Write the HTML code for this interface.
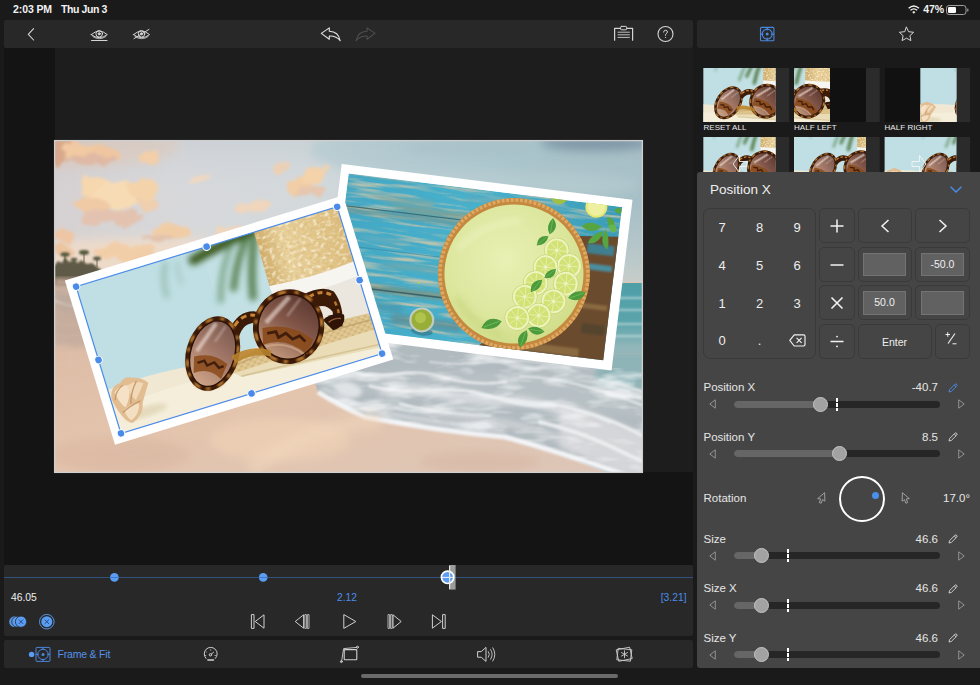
<!DOCTYPE html>
<html>
<head>
<meta charset="utf-8">
<title>Frame &amp; Fit</title>
<style>
*{box-sizing:border-box;margin:0;padding:0}
html,body{width:980px;height:685px;overflow:hidden;background:#1a1a1a}
body{position:relative;font-family:"Liberation Sans",sans-serif;color:#e8e8e8}
.abs{position:absolute}
.bar{position:absolute;background:#282828;border-radius:2px}
.status{position:absolute;top:3px;font-size:10.5px;font-weight:bold;color:#f2f2f2;line-height:13px;letter-spacing:-.1px}
svg{position:absolute;overflow:visible}
.lbl{position:absolute;font-size:11.5px;color:#e6e6e6;line-height:13px;white-space:nowrap}
.val{position:absolute;font-size:11.5px;color:#e6e6e6;line-height:13px;white-space:nowrap;text-align:right}
.track{position:absolute;height:7px;border-radius:4px;background:#262626}
.fill{position:absolute;height:7px;border-radius:4px;background:#666}
.knob{position:absolute;width:15px;height:15px;border-radius:50%;background:#a2a2a2;border:1px solid #c4c4c4}
.tick{position:absolute;width:2px;height:13px;background:repeating-linear-gradient(#fff 0 4px,transparent 4px 5px)}
.key{position:absolute;border:1px solid #3a3a3a;border-radius:5px;background:#454545}
.ibox{position:absolute;background:#616161;border:1px solid #737373;font-size:10.5px;color:#f0f0f0;text-align:center;line-height:21.5px}
.tl{position:absolute;top:122.5px;font-size:8px;line-height:9px;letter-spacing:.05px;color:#ececec;white-space:nowrap}
.num{position:absolute;font-size:13px;color:#eee;width:20px;text-align:center;line-height:14px}
</style>
</head>
<body>

<!-- status bar -->
<div class="status" style="left:13px">2:03 PM</div>
<div class="status" style="left:61px;letter-spacing:-.4px">Thu Jun 3</div>
<div class="status" style="left:923.3px">47%</div>

<!-- top toolbars -->
<div class="bar" style="left:4px;top:20px;width:689px;height:28px"></div>
<div class="bar" style="left:697px;top:20px;width:283px;height:28px;border-radius:3px 0 0 3px"></div>

<!-- canvas area -->
<div class="abs" style="left:4px;top:48px;width:689px;height:517px;background:#141414"></div>
<div class="abs" id="stage" style="left:55px;top:48px;width:638px;height:424px;background:#1d1d1d"></div>

<!-- photo -->
<svg id="photo" style="left:54px;top:140px" width="589" height="333" viewBox="54 140 589 333">
<defs>
<clipPath id="cpMain"><rect x="54" y="140" width="589" height="333"/></clipPath>
<filter id="b2" x="-20%" y="-20%" width="140%" height="140%"><feGaussianBlur stdDeviation="2"/></filter>
<filter id="b3" x="-20%" y="-20%" width="140%" height="140%"><feGaussianBlur stdDeviation="3.2"/></filter>
<filter id="b5" x="-30%" y="-30%" width="160%" height="160%"><feGaussianBlur stdDeviation="5"/></filter>
<filter id="wear" x="0" y="0" width="100%" height="100%"><feTurbulence type="fractalNoise" baseFrequency="0.018 0.22" numOctaves="3" seed="7"/><feColorMatrix values="0 0 0 0 .60  0 0 0 0 .57  0 0 0 0 .42  3.4 0 0 0 -1.6"/></filter>
<filter id="wear2" x="0" y="0" width="100%" height="100%"><feTurbulence type="fractalNoise" baseFrequency="0.03 0.5" numOctaves="2" seed="11"/><feColorMatrix values="0 0 0 0 .14  0 0 0 0 .36  0 0 0 0 .44  2.6 0 0 0 -1.35"/></filter>
<filter id="foamT" x="0" y="0" width="100%" height="100%"><feTurbulence type="fractalNoise" baseFrequency="0.022 0.07" numOctaves="3" seed="3"/><feColorMatrix values="0 0 0 0 .93  0 0 0 0 .94  0 0 0 0 .95  3.4 0 0 0 -1.6"/></filter>
<filter id="sandT" x="0" y="0" width="100%" height="100%"><feTurbulence type="fractalNoise" baseFrequency="0.05 0.18" numOctaves="2" seed="5"/><feColorMatrix values="0 0 0 0 .72  0 0 0 0 .56  0 0 0 0 .48  1.6 0 0 0 -.72"/></filter>
<filter id="cloudF" x="-20%" y="-20%" width="140%" height="140%"><feTurbulence type="fractalNoise" baseFrequency=".05" numOctaves="3" seed="2" result="n"/><feDisplacementMap in="SourceGraphic" in2="n" scale="16" xChannelSelector="R" yChannelSelector="G"/><feGaussianBlur stdDeviation="1.4"/></filter>
<filter id="strawL" x="0" y="0" width="100%" height="100%"><feTurbulence type="fractalNoise" baseFrequency=".22 .3" numOctaves="2" seed="9"/><feColorMatrix values="0 0 0 0 .96  0 0 0 0 .90  0 0 0 0 .72  3 0 0 0 -1.45"/></filter>
<filter id="strawD" x="0" y="0" width="100%" height="100%"><feTurbulence type="fractalNoise" baseFrequency=".25 .33" numOctaves="2" seed="21"/><feColorMatrix values="0 0 0 0 .62  0 0 0 0 .45  0 0 0 0 .2  3 0 0 0 -1.6"/></filter>
<filter id="b1" x="-20%" y="-20%" width="140%" height="140%"><feGaussianBlur stdDeviation="1"/></filter>
<linearGradient id="skyH" x1="0" x2="1" y1="0" y2="0">
 <stop offset="0" stop-color="#d6d0d1"/><stop offset=".2" stop-color="#d8d8db"/><stop offset=".45" stop-color="#d3d9dc"/><stop offset=".62" stop-color="#bccfd4"/><stop offset=".8" stop-color="#a9c4ca"/><stop offset="1" stop-color="#a6bfc6"/>
</linearGradient>
<linearGradient id="skyV" x1="0" x2="0" y1="0" y2="1">
 <stop offset="0" stop-color="#9fb2bc" stop-opacity=".18"/><stop offset=".4" stop-color="#c8d4d8" stop-opacity="0"/><stop offset="1" stop-color="#f3dfcc" stop-opacity=".5"/>
</linearGradient>
<linearGradient id="sandG" x1="0" x2="1" y1="0" y2="1">
 <stop offset="0" stop-color="#d8b7a3"/><stop offset=".45" stop-color="#e4c4ac"/><stop offset="1" stop-color="#dcc6b8"/>
</linearGradient>
<linearGradient id="seaG" x1="0" x2="0" y1="0" y2="1">
 <stop offset="0" stop-color="#4f9fa8"/><stop offset=".55" stop-color="#5aa4aa"/><stop offset="1" stop-color="#9dbabd"/>
</linearGradient>
</defs>
<g clip-path="url(#cpMain)">
<!-- sky -->
<rect x="54" y="140" width="589" height="150" fill="url(#skyH)"/>
<rect x="54" y="140" width="589" height="150" fill="url(#skyV)"/>
<ellipse cx="70" cy="146" rx="110" ry="22" fill="#e8c4a8" opacity=".35" filter="url(#b5)"/><ellipse cx="150" cy="288" rx="250" ry="50" fill="#f2dcc8" opacity=".8" filter="url(#b5)"/><ellipse cx="430" cy="150" rx="120" ry="26" fill="#a9c6ce" opacity=".5" filter="url(#b5)"/>
<!-- clouds -->
<g filter="url(#cloudF)">
 <ellipse cx="58" cy="150" rx="10" ry="14" fill="#d8a98c"/>
 <ellipse cx="80" cy="150" rx="20" ry="9" fill="#f1c9a2"/><ellipse cx="104" cy="154" rx="20" ry="8" fill="#efc6a0"/><ellipse cx="92" cy="160" rx="26" ry="5" fill="#dfb9a4"/>
 <ellipse cx="149" cy="160" rx="10" ry="6" fill="#f2cfa8"/>
 <ellipse cx="96" cy="187" rx="17" ry="11" fill="#f6d7ae"/><ellipse cx="118" cy="196" rx="26" ry="14" fill="#f7dbb4"/><ellipse cx="142" cy="190" rx="16" ry="10" fill="#f4d3aa"/>
 <ellipse cx="92" cy="206" rx="18" ry="9" fill="#f0caa4"/><ellipse cx="112" cy="218" rx="30" ry="7" fill="#e3c3b0"/><ellipse cx="146" cy="203" rx="12" ry="6" fill="#efcfae"/>
 <ellipse cx="170" cy="231" rx="19" ry="8" fill="#f1cda6"/><ellipse cx="160" cy="238" rx="16" ry="4" fill="#e4c2ac"/>
 <ellipse cx="66" cy="234" rx="11" ry="8" fill="#eec6a4"/><ellipse cx="62" cy="250" rx="10" ry="6" fill="#ecc4a0"/>
 <ellipse cx="122" cy="252" rx="30" ry="8" fill="#f2cea8"/><ellipse cx="150" cy="262" rx="20" ry="6" fill="#efcaa6"/>
 <ellipse cx="300" cy="186" rx="11" ry="10" fill="#f2cea6"/><ellipse cx="314" cy="176" rx="12" ry="11" fill="#f4d2aa"/><ellipse cx="310" cy="194" rx="14" ry="5" fill="#e6c6ae"/>
 <ellipse cx="254" cy="206" rx="19" ry="6" fill="#efd6bc"/><ellipse cx="200" cy="178" rx="11" ry="4" fill="#efd8c0"/><ellipse cx="281" cy="167" rx="8" ry="6" fill="#ecd0b6"/>
 <ellipse cx="226" cy="232" rx="12" ry="5" fill="#efd6bc"/>
 <ellipse cx="332" cy="240" rx="10" ry="8" fill="#c99c7c"/>
</g>
<g filter="url(#b5)">
 <ellipse cx="595" cy="143" rx="55" ry="8" fill="#7890a0" opacity=".8"/>
 <ellipse cx="470" cy="148" rx="70" ry="7" fill="#a9bec6" opacity=".6"/>
 <ellipse cx="500" cy="185" rx="140" ry="14" fill="#bcd0d4" opacity=".5"/>
</g>
<!-- sea right -->
<rect x="590" y="283" width="60" height="70" fill="url(#seaG)"/>
<path d="M600 300h43M606 312h37M600 326h43M610 338h33" stroke="#b9d6d8" stroke-width="1.6" opacity=".7" filter="url(#b1)"/>
<!-- beach -->
<rect x="54" y="282" width="589" height="191" fill="url(#sandG)"/>
<rect x="590" y="283" width="60" height="70" fill="url(#seaG)"/>
<path d="M600 298h43M606 310h37M600 324h43M610 336h33" stroke="#c5dfe0" stroke-width="1.8" opacity=".7" filter="url(#b1)"/>
<!-- left treeline and wet sand -->
<path d="M54 266 l4-5 4 2 3-6 4 5 5-2 4 3 3-3 6 4 5-1 8 6 12 6 0 10 -58 0z" fill="#5e5a46" filter="url(#b1)"/><path d="M65 264v-9M84 263v-10M97 267v-8M74 266v-6" stroke="#6a5a44" stroke-width=".9" fill="none"/><g fill="#55583c" filter="url(#b1)"><ellipse cx="65" cy="254.5" rx="4.6" ry="2.2"/><ellipse cx="84" cy="252.5" rx="5" ry="2.4"/><ellipse cx="97" cy="258.5" rx="4" ry="2"/><ellipse cx="74" cy="259.5" rx="3.4" ry="1.8"/></g>
<path d="M54 278h62v9h-62z" fill="#b9a08e" filter="url(#b2)"/>
<path d="M54 290 q20 6 40 2 l10 20 q-30 4 -50 -4z" fill="#c4b2a6" opacity=".75" filter="url(#b3)"/>
<path d="M54 300 q14 8 34 6" stroke="#e9e2de" stroke-width="2.5" fill="none" filter="url(#b1)" opacity=".8"/>
<path d="M54 288 L120 288 L110 340 Q80 352 54 344Z" fill="#b5a396" opacity=".55" filter="url(#b3)"/>
<rect x="54" y="284" width="536" height="189" filter="url(#sandT)" opacity=".28"/>
<!-- shallow water & foam -->
<path d="M300 340 L600 340 L600 368 L660 368 L660 480 L625 480 Q560 452 505 438 Q440 432 365 418 Q340 405 318 392 Z" fill="#b0babf"/>
<path d="M330 372 L600 372 L660 380 L660 420 Q540 405 430 402 Q370 398 330 380Z" fill="#b7c0c4" filter="url(#b3)"/><path d="M596 350 L660 350 L660 392 L596 384Z" fill="#8fb4b8" filter="url(#b3)"/>
<path d="M560 400 Q610 420 660 440 L660 480 L628 480 Q600 462 560 448Z" fill="#d5d6d9" filter="url(#b3)"/>
<path d="M380 392 q30 -8 60 2 q40 10 80 6 q30 4 60 20" stroke="#e6e7ea" stroke-width="7" fill="none" filter="url(#b3)" opacity=".85"/>
<path d="M420 410 q50 6 90 14 q40 8 80 28" stroke="#dcdde0" stroke-width="6" fill="none" filter="url(#b3)" opacity=".8"/>
<path d="M318 392 Q340 406 365 417 Q440 431 505 437 Q560 452 628 476" stroke="#f2f3f5" stroke-width="5" fill="none" filter="url(#b1)"/>
<path d="M322 388 Q345 398 368 410 Q440 424 505 431" stroke="#e3e4e7" stroke-width="4" fill="none" filter="url(#b2)" opacity=".8"/>
<g filter="url(#b1)" fill="none" stroke="#eef0f2" stroke-linecap="round" opacity=".9">
 <path d="M352 372 q20 6 44 2 q26 -4 50 4 q30 8 60 4" stroke-width="2.4"/>
 <path d="M430 362 q30 4 60 0 q40 -4 80 6" stroke-width="2" opacity=".7"/>
 <path d="M370 386 q30 8 70 4 q30 -2 56 8 q30 10 60 8" stroke-width="3"/>
 <path d="M470 392 q40 10 80 12 q30 4 60 18" stroke-width="3.2"/>
 <path d="M520 376 q40 2 70 12 q26 8 52 10" stroke-width="2.4" opacity=".8"/>
 <path d="M540 422 q40 10 70 24 q20 10 34 16" stroke-width="4"/>
 <path d="M575 410 q30 6 68 26" stroke-width="3.5"/>
 <path d="M400 404 q40 10 90 12" stroke-width="2.6" opacity=".8"/>
 <path d="M600 380 q20 4 44 12M606 394 q20 4 38 12" stroke-width="2.6" opacity=".8"/>
</g>
<path d="M332 384 q14 -6 26 2 q10 8 -4 12 q-16 0 -22 -14z" fill="#eceef0" opacity=".8" filter="url(#b2)"/>
<clipPath id="cpWater"><path d="M300 340 L600 340 L600 368 L660 368 L660 480 L625 480 Q560 452 505 438 Q440 432 365 418 Q340 405 318 392 Z"/></clipPath>
<g clip-path="url(#cpWater)"><rect x="300" y="340" width="360" height="140" filter="url(#foamT)" opacity=".7"/></g>
<!-- sand highlights -->
<ellipse cx="280" cy="440" rx="70" ry="22" fill="#f0d2b6" opacity=".65" filter="url(#b5)"/>
<ellipse cx="120" cy="455" rx="70" ry="18" fill="#d3ad98" opacity=".35" filter="url(#b5)"/><path d="M250 470 Q300 430 380 420" stroke="#f3d8bc" stroke-width="16" fill="none" opacity=".5" filter="url(#b5)"/>
<ellipse cx="480" cy="462" rx="60" ry="10" fill="#d9baa8" opacity=".8" filter="url(#b5)"/>
</g>
<!-- pie photo (rotated 7deg) -->
<g clip-path="url(#cpMain)">
<g transform="translate(348.6 173.4) rotate(7)">
<defs>
 <clipPath id="cpPie"><rect x="0" y="0" width="275.5" height="154.5"/></clipPath>
 <radialGradient id="fillG" cx=".42" cy=".4" r=".65"><stop offset="0" stop-color="#e9f0b4"/><stop offset=".7" stop-color="#dbe69c"/><stop offset="1" stop-color="#cfdc86"/></radialGradient>
 <linearGradient id="woodB" x1="0" x2="1" y1="0" y2="0"><stop offset="0" stop-color="#42a8c5"/><stop offset=".5" stop-color="#48b2cd"/><stop offset="1" stop-color="#3a9cb8"/></linearGradient>
 <g id="lime"><circle r="12.6" fill="#c2d46a"/><circle r="12" fill="#eef3c0"/><circle r="10" fill="#d3e274"/><path d="M0-10V10M-10 0H10M-7-7L7 7M-7 7L7-7" stroke="#e6efae" stroke-width=".9"/><circle r="1.6" fill="#eef3c4"/></g>
 <g id="leaf"><path d="M0 0 Q6 -9 18 -5 Q12 7 0 0Z" fill="#4b9a3c"/><path d="M2 0 Q9 -2 16 -4.5" stroke="#7cc05a" stroke-width=".7" fill="none"/></g>
</defs>
<rect x="-8" y="-8.5" width="293" height="172" fill="#fff"/>
<g clip-path="url(#cpPie)">
 <rect x="0" y="0" width="276" height="155" fill="url(#woodB)"/>
 <rect x="0" y="0" width="276" height="155" filter="url(#wear2)" opacity=".55"/>
 <rect x="0" y="0" width="276" height="155" filter="url(#wear)" opacity=".85"/>
 <!-- worn paint -->
 <g filter="url(#b2)" opacity=".75">
  <path d="M18 18h70v5h-50z" fill="#8fa79a"/><path d="M40 26h85v5h-60z" fill="#9a9a7a"/>
  <path d="M0 34h120v4h-120z" fill="#7d8f82"/>
  <path d="M10 60h60v4h-40z" fill="#6fb0bd"/><path d="M40 84h70v4h-50z" fill="#88a8a0"/>
  <path d="M20 108h90v6h-90z" fill="#8c8a6a"/><path d="M0 124h70v8h-70z" fill="#4c98ad"/>
  <path d="M60 134h70v10h-70z" fill="#5e8c92"/><path d="M0 142h40v12h-40z" fill="#7a8f86"/>
  <path d="M120 6h100v6h-100z" fill="#5aa9bd"/>
 </g>
 <path d="M0 32.5H130" stroke="#2f5e66" stroke-width="1.2" opacity=".8"/>
 <path d="M20 112H120" stroke="#2f5560" stroke-width="1.4" opacity=".8"/>
 <path d="M0 72H100" stroke="#3689a2" stroke-width="1" opacity=".6"/>
 <!-- brown wood right -->
 <path d="M236 34 L276 30 L276 155 L150 155 L160 146 L236 120Z" fill="#6b4b2e"/>
 <g filter="url(#b1)"><path d="M240 60h33v6h-33z" fill="#4a8fa0"/><path d="M236 100h37v5h-37zM180 146h70v8h-70z" fill="#8a6a40"/><path d="M246 40h27v10h-27z" fill="#3f7f8f"/><path d="M250 120h23v10h-23z" fill="#54442f"/></g>
 <!-- pie -->
 <circle cx="176.4" cy="79.7" r="76" fill="#c4883f"/>
 <circle cx="176.4" cy="79.7" r="74" fill="none" stroke="#dfa862" stroke-width="3.5" stroke-dasharray="3 1.6"/>
 <circle cx="176.4" cy="79.7" r="69.5" fill="url(#fillG)"/>
 <path d="M118 62 q20 -30 60 -36" stroke="#f1f5c8" stroke-width="5" fill="none" opacity=".6" filter="url(#b3)"/>
 <path d="M122 110 q20 26 50 32" stroke="#c6d47c" stroke-width="6" fill="none" opacity=".7" filter="url(#b3)"/>
 <!-- lime slices -->
 <use href="#lime" x="216" y="51"/><use href="#lime" x="230" y="65"/><use href="#lime" x="207" y="69"/>
 <use href="#lime" x="229" y="83"/><use href="#lime" x="199" y="86"/><use href="#lime" x="219" y="102"/>
 <use href="#lime" x="190" y="101"/><use href="#lime" x="206" y="118"/><use href="#lime" x="185" y="123"/>
 <!-- mint -->
 <use href="#leaf" transform="translate(207 36) rotate(-70) scale(.9)"/><use href="#leaf" transform="translate(206 38) rotate(150) scale(.8)"/>
 <use href="#leaf" transform="translate(207 80) rotate(-30) scale(.8)"/><use href="#leaf" transform="translate(205 82) rotate(140) scale(.9)"/>
 <use href="#leaf" transform="translate(170 128) rotate(170) scale(1.15)"/><use href="#leaf" transform="translate(197 132) rotate(20) scale(.9)"/>
 <use href="#leaf" transform="translate(196 134) rotate(120) scale(1)"/><use href="#leaf" transform="translate(233 97) rotate(-10) scale(1)"/>
 <!-- top-right lime & mint -->
 <circle cx="250" cy="3" r="11" fill="#e6e870"/><circle cx="250" cy="3" r="9" fill="#eef0a0"/>
 <circle cx="212" cy="-4" r="9" fill="#9fc043"/>
 <g fill="#56a540"><path d="M262 12 q8 -2 9 10 q-8 2 -9 -10z"/><path d="M258 22 q-14 -6 -20 2 q10 8 20 -2z"/><path d="M260 26 q-12 4 -14 14 q12 0 14 -14z"/><path d="M262 24 q6 10 4 20 q-10 -6 -4 -20z"/><path d="M264 20 q8 -4 9 4 q-4 6 -9 -4z" fill="#67b64c"/><path d="M268 4 q6 -6 8 0 q-2 6 -8 0z"/></g>
 <!-- matcha bowl -->
 <ellipse cx="92" cy="148" rx="11" ry="4" fill="#2f6f82" opacity=".6"/><circle cx="90.5" cy="136.5" r="12.5" fill="#c5cfc0" opacity=".95"/><circle cx="90.5" cy="136.5" r="10.4" fill="#98ae38"/><circle cx="89" cy="134.5" r="5.5" fill="#b0c44c"/>
 <circle cx="83" cy="100" r="1" fill="#b8d23a"/>
</g>
</g>
</g>
<!-- sunglasses photo (rotated -17deg), selected -->
<g clip-path="url(#cpMain)">
<g transform="translate(76.1 286.6) rotate(-17)">
<defs>
 <g id="sunPic">
 <rect width="273" height="153.5" fill="#c3e1e5"/>
 <rect width="130" height="153.5" fill="#bcdde2" opacity=".6"/>
 <!-- palm fronds -->
 <g filter="url(#b3)" fill="none" stroke-linecap="round">
  <path d="M188 -3 Q150 2 120 9" stroke="#3a591d" stroke-width="10"/>
  <path d="M176 4 Q160 24 150 48" stroke="#3f6a2c" stroke-width="6" opacity=".9"/>
  <path d="M184 6 Q172 34 166 62" stroke="#3c6628" stroke-width="7" opacity=".85"/>
  <path d="M160 6 Q142 28 134 56" stroke="#5a8858" stroke-width="5" opacity=".75"/>
  <path d="M92 4 Q84 18 84 36" stroke="#7fa58c" stroke-width="4" opacity=".7"/>
  <path d="M104 6 Q100 16 102 28" stroke="#8fb29c" stroke-width="3" opacity=".6"/>
 </g>
 <!-- sand -->
 <path d="M0 108 Q40 104 90 110 L273 112 L273 153.5 L0 153.5Z" fill="#f0e8d2"/>
 <path d="M0 128 Q80 118 273 136 L273 153.5 L0 153.5Z" fill="#f5efdd" opacity=".8"/>
 <!-- hat brim -->
 <path d="M124 127 Q200 126 273 126 V147 Q200 141 132 135Z" fill="#e9dcb6"/>
 <path d="M132 134 Q200 138 273 144" stroke="#cdb98a" stroke-width="1.6" fill="none" opacity=".7"/>
 <path d="M118 118 Q190 107 273 109 V128 Q200 128 122 129Z" fill="#d9bf88"/>
 <path d="M118 118 Q190 107 273 109 V128 Q200 128 122 129Z" fill="url(#straw)" opacity=".45"/>
 <path d="M120 123 Q190 114 273 118" stroke="#b89a62" stroke-width="1.6" fill="none" opacity=".6"/>
 <!-- hat band white -->
 <path d="M185 55 Q230 60 273 56 V111 Q225 109 188 101Z" fill="#ebe7df"/>
 <path d="M185 56 Q230 61 273 57 V72 Q230 76 186 72Z" fill="#f7f5f0"/>
 <!-- hat crown straw -->
 <path d="M186 0 H273 V57 Q230 61 185 56 Z" fill="url(#strawG)"/>
 <clipPath id="cpCrown"><path d="M186 0 H273 V57 Q230 61 185 56 Z"/></clipPath><g clip-path="url(#cpCrown)"><rect x="180" y="0" width="95" height="64" filter="url(#strawD)" opacity=".8"/><rect x="180" y="0" width="95" height="64" filter="url(#strawL)" opacity=".9"/></g>
 <!-- shell -->
 <ellipse cx="30" cy="140" rx="22" ry="5" fill="#d9cba6" opacity=".6" filter="url(#b2)"/>
 <path d="M1 118 Q3 105 14 105 Q20 99 28 104 Q36 106 41 113 Q35 122 30 130 Q27 143 14 147 Q5 142 1 118Z" fill="#e2bd92"/>
 <path d="M6 112 Q14 106 22 110 Q20 122 12 130 Q7 124 6 112Z" fill="#f5e2c6"/>
 <path d="M20 110 Q28 106 36 112 Q30 120 24 126 Q20 120 20 110Z" fill="#f1d8b6"/>
 <path d="M10 132 Q18 128 26 130 Q24 140 14 144 Q10 140 10 132Z" fill="#f3dfc2"/>
 <path d="M4 120 Q8 110 16 108 M18 128 Q22 116 30 108 M8 134 Q16 130 28 128" stroke="#bf8d5c" stroke-width="1.3" fill="none" opacity=".8"/>
 <!-- glasses: temple arm right -->
 <path d="M214 74 Q236 70 245 80 Q251 96 243 116 Q235 113 238 99 Q234 88 220 90Z" fill="#3c1a08"/>
 <path d="M220 78 Q234 74 242 83" stroke="#c58233" stroke-width="3" fill="none" stroke-dasharray="5 4"/>
 <path d="M243 90 Q245 102 241 110" stroke="#b87428" stroke-width="2.4" fill="none" stroke-dasharray="4 4"/>
 <path d="M226 104 Q238 99 248 105 Q247 117 233 117Z" fill="#2e1306"/>
 <path d="M231 108 Q238 105 244 108" stroke="#8a5a34" stroke-width="1.4" fill="none"/>
 <!-- bridge -->
 <path d="M134 86 Q150 68 168 78 L166 89 Q150 81 141 96Z" fill="#3c1a08"/>
 <path d="M140 84 Q151 74 163 80" stroke="#c98634" stroke-width="3" fill="none" stroke-dasharray="6 4"/>
 <!-- left lens (narrow ellipse) -->
 <g transform="translate(111 104) rotate(33)">
  <ellipse rx="26.5" ry="38" fill="#3c1a08"/>
  <ellipse rx="24.2" ry="35.8" fill="none" stroke="#c98634" stroke-width="3" stroke-dasharray="7 8 4 6" filter="url(#b1)"/>
  <ellipse rx="22" ry="33.5" fill="url(#lensG2)"/>
  <path d="M-17 8 Q0 -2 17 6 L15 22 Q0 14 -13 24Z" fill="#8a4a1a" opacity=".85"/>
  <path d="M-12 13 l6 -4 4 4 6 -5 6 4 4 -3" stroke="#2e1206" stroke-width="2.4" fill="none" opacity=".8"/>
  <ellipse rx="22" ry="33.5" fill="none" stroke="#2a1005" stroke-width="1.3"/>
  <path d="M-5 -30 L-16 2" stroke="#f4e8e0" stroke-width="4" opacity=".6" filter="url(#b1)"/>
  <path d="M5 -30 L-1 -12" stroke="#f1e4da" stroke-width="1.8" opacity=".45" filter="url(#b1)"/>
 </g>
 <!-- right lens -->
 <g transform="translate(191.5 100.5) rotate(32)">
  <ellipse rx="35.5" ry="37.5" fill="#3c1a08"/>
  <ellipse rx="33" ry="35" fill="none" stroke="#c98634" stroke-width="3.2" stroke-dasharray="8 9 4 7" filter="url(#b1)"/>
  <ellipse rx="30.5" ry="32.5" fill="url(#lensG)"/>
  <path d="M-25 8 Q0 -5 27 6 L25 22 Q0 10 -20 24Z" fill="#8a4a1a" opacity=".9"/>
  <path d="M-19 12 l8 -4 4 5 6 -6 8 4 6 -5 7 4" stroke="#2e1206" stroke-width="2.8" fill="none" opacity=".8"/>
  <path d="M-17 25 Q2 14 23 23" stroke="#d9b08c" stroke-width="2" fill="none" opacity=".6"/>
  <ellipse rx="30.5" ry="32.5" fill="none" stroke="#2a1005" stroke-width="1.4"/>
  <path d="M-7 -29 L-23 2" stroke="#f3e6dc" stroke-width="4.6" opacity=".6" filter="url(#b1)"/>
  <path d="M4 -30 L-4 -10" stroke="#f3e6dc" stroke-width="2" opacity=".45" filter="url(#b1)"/>
 </g>
 <!-- left temple behind -->
 <path d="M128 112 Q150 106 168 118 L166 124 Q150 114 130 120Z" fill="#b9842e" opacity=".9"/>
</g>
 <clipPath id="cpSun"><rect x="0" y="0" width="273" height="153.5"/></clipPath>
 <linearGradient id="lensG" x1=".6" x2=".3" y1="0" y2="1"><stop offset="0" stop-color="#5e3a32"/><stop offset=".45" stop-color="#84584a"/><stop offset="1" stop-color="#c49a7e"/></linearGradient>
 <linearGradient id="lensG2" x1=".6" x2=".3" y1="0" y2="1"><stop offset="0" stop-color="#7d5a50"/><stop offset=".45" stop-color="#a27868"/><stop offset="1" stop-color="#cfa688"/></linearGradient>
 <linearGradient id="strawG" x1="0" x2="1" y1="0" y2="0"><stop offset="0" stop-color="#cfab68"/><stop offset=".3" stop-color="#e8cf98"/><stop offset="1" stop-color="#dcbc7c"/></linearGradient>
 <pattern id="straw" width="7" height="6" patternUnits="userSpaceOnUse"><rect width="7" height="6" fill="none"/><ellipse cx="2" cy="1.6" rx="2.2" ry="1.2" fill="#efd9a6"/><ellipse cx="5.5" cy="4.6" rx="2.2" ry="1.2" fill="#f0dcae"/><ellipse cx="5.6" cy="1.4" rx="1" ry=".7" fill="#b98f4e"/><ellipse cx="2" cy="4.5" rx="1" ry=".7" fill="#be9656"/></pattern>
 <pattern id="tort" width="9" height="8" patternUnits="userSpaceOnUse"><rect width="9" height="8" fill="#4a220c"/><ellipse cx="2.5" cy="2.2" rx="2.2" ry="1.5" fill="#c27a2a"/><ellipse cx="7" cy="6" rx="1.8" ry="1.4" fill="#d89442"/></pattern>
</defs>
<rect x="-9" y="-9" width="291" height="171.5" fill="#fff"/>
<use href="#sunPic" clip-path="url(#cpSun)"/>
<!-- selection -->
<rect x="0" y="0" width="273" height="153.5" fill="none" stroke="#4a8bea" stroke-width="1.2"/>
<g fill="#4a8bea" stroke="#fff" stroke-width="1">
 <circle cx="0" cy="0" r="3.8"/><circle cx="136.5" cy="0" r="3.8"/><circle cx="273" cy="0" r="3.8"/>
 <circle cx="0" cy="76.75" r="3.8"/><circle cx="273" cy="76.75" r="3.8"/>
 <circle cx="0" cy="153.5" r="3.8"/><circle cx="136.5" cy="153.5" r="3.8"/><circle cx="273" cy="153.5" r="3.8"/>
</g>
</g>
</g>
<rect x="54.6" y="140.6" width="587.8" height="331.8" fill="none" stroke="#cfcfcf" stroke-width="1.3"/>
</svg>

<!-- timeline -->
<div class="bar" id="timeline" style="left:4px;top:565px;width:689px;height:71px"></div>
<!-- bottom toolbar -->
<div class="bar" id="btm" style="left:4px;top:640px;width:689px;height:28px"></div>
<!-- home indicator -->
<div class="abs" style="left:361px;top:674px;width:257px;height:4px;border-radius:2px;background:#6a6a6a"></div>

<!-- thumbnails -->
<svg style="left:697px;top:60px" width="283" height="112" viewBox="697 60 283 112">
<defs>
 <clipPath id="t1"><rect x="703.5" y="68" width="72" height="54"/></clipPath>
 <clipPath id="t2"><rect x="794" y="68" width="36" height="54"/></clipPath>
 <clipPath id="t3"><rect x="920.5" y="68" width="36" height="54"/></clipPath>
 <clipPath id="t4"><rect x="703.5" y="137" width="72" height="36"/></clipPath>
 <clipPath id="t5"><rect x="794" y="137" width="72" height="36"/></clipPath>
 <clipPath id="t6"><rect x="884.5" y="137" width="72" height="36"/></clipPath>
</defs>
<g fill="#2b2b2b"><rect x="703.5" y="68" width="85.7" height="54"/><rect x="794" y="68" width="85.7" height="54"/><rect x="884.5" y="68" width="85.7" height="54"/>
<rect x="703.5" y="137" width="85.7" height="36"/><rect x="794" y="137" width="85.7" height="36"/><rect x="884.5" y="137" width="85.7" height="36"/></g>
<rect x="830" y="68" width="36" height="54" fill="#111"/><rect x="884.5" y="68" width="36" height="54" fill="#111"/>
<g clip-path="url(#t1)"><use href="#sunPic" transform="translate(703.5 68) scale(.47) translate(-58 -30)"/></g>
<g clip-path="url(#t2)"><use href="#sunPic" transform="translate(745.5 68) scale(.47) translate(-58 -30)"/></g>
<g clip-path="url(#t3)"><use href="#sunPic" transform="translate(920.5 68) scale(.47) translate(-8 -30)"/></g>
<g clip-path="url(#t4)"><use href="#sunPic" transform="translate(698 134) scale(.46) translate(-49 -28)"/></g>
<g clip-path="url(#t5)"><use href="#sunPic" transform="translate(772 134) scale(.46) translate(0 -28)"/></g>
<g clip-path="url(#t6)"><use href="#sunPic" transform="translate(884.5 134) scale(.46) translate(0 -28)"/></g>
<g fill="none" stroke="#f4f4f4" stroke-width=".9" stroke-linejoin="round"><path d="M739.5 155.5L733 164L739.5 172.5V166.5H747V161.5H739.5Z"/><path d="M919.5 155.5L926 164L919.5 172.5V166.5H912V161.5H919.5Z"/></g>
</svg>
<div class="tl" style="left:703.5px">RESET ALL</div><div class="tl" style="left:794px">HALF LEFT</div><div class="tl" style="left:884.5px">HALF RIGHT</div>

<!-- right panel -->
<div class="abs" id="panel" style="left:697px;top:172px;width:283px;height:496px;background:#454545;border-radius:3px 0 0 3px"></div>

<!-- icons -->
<!-- status icons -->
<svg style="left:908px;top:5.4px" width="11.6" height="9" viewBox="0 0 13 10"><path d="M.7 3.6Q6.5 -1.6 12.3 3.6" fill="none" stroke="#f2f2f2" stroke-width="1.5"/><path d="M2.8 5.9Q6.5 2.6 10.2 5.9" fill="none" stroke="#f2f2f2" stroke-width="1.5"/><path d="M4.7 7.9Q6.5 6.3 8.3 7.9L6.5 9.7Z" fill="#f2f2f2"/></svg>
<svg style="left:946px;top:5px" width="23" height="10" viewBox="0 0 23 10"><rect x=".5" y=".5" width="19.5" height="9" rx="2.6" fill="none" stroke="#a0a0a0" stroke-width="1"/><rect x="2" y="2" width="8" height="6" rx="1.3" fill="#fff"/><rect x="21.2" y="3.4" width="1.2" height="3.2" rx=".6" fill="#a0a0a0"/></svg>
<!-- top toolbar icons -->
<svg style="left:0;top:0" width="980" height="50" viewBox="0 0 980 50" fill="none" stroke="#d4d4d4" stroke-width="1" stroke-linejoin="round" stroke-linecap="round">
 <path d="M33.6 28.6L28.3 34.3L33.6 40" stroke-width="1.1"/>
 <!-- eye -->
 <g id="eye"><path d="M91.2 34.6Q99.2 27.6 107.3 34.6Q99.2 40.8 91.2 34.6Z"/><path d="M92.8 36.6Q99.2 41 105.8 36.6" stroke-width=".8"/><circle cx="99.2" cy="33.8" r="3.3"/><circle cx="99.2" cy="33.8" r="1.1" fill="#d4d4d4"/></g>
 <path d="M91.5 40.5H107" stroke-width="1.1"/>
 <use href="#eye" x="42.3"/>
 <path d="M134 38.6L149 29.4" stroke-width="1"/>
 <!-- undo / redo -->
 <path id="undo" d="M321.3 33.4L329.3 27.9V31.2Q338.6 31.4 340.2 40.8Q336.6 35.8 329.3 36V39.2Z" stroke="#e2e2e2" stroke-width="1.1"/>
 <path d="M375 33.4L367 27.9V31.2Q357.7 31.4 356.1 40.8Q359.7 35.8 367 36V39.2Z" stroke="#4e4e4e" stroke-width="1.1"/>
 <!-- clipboard -->
 <path d="M614.6 40.2V28.4H632.6V40.2" stroke-width="1.2"/><rect x="620.6" y="26.4" width="6" height="3.4" rx=".8" fill="#282828" stroke-width="1"/>
 <path d="M618 32.2H629.4M618 34.8H629.4M618 37.4H629.4" stroke-width=".9"/>
 <!-- help -->
 <circle cx="665.5" cy="34" r="7.5" stroke-width="1.1"/>
 <path d="M663.6 32.1Q663.7 30.2 665.6 30.2Q667.5 30.3 667.4 32Q667.3 33 666.2 33.7Q665.5 34.2 665.5 35.4" stroke-width="1"/><circle cx="665.5" cy="37.5" r=".6" fill="#d4d4d4" stroke="none"/>
 <!-- frame icon blue -->
 <g stroke="#4a86dc" stroke-width="1.1"><rect x="760.5" y="27.4" width="13.4" height="13.4" rx="1"/><circle cx="767.2" cy="34.1" r="5"/><circle cx="767.2" cy="34.1" r="1.5" fill="#4a86dc" stroke="none"/><path d="M767.2 27.6V30M767.2 38.2V40.6M760.7 34.1H763M771.4 34.1H773.7" stroke-width="1.2"/></g>
 <!-- star -->
 <path d="M906.5 27.2L908.6 31.7L913.6 32.3L909.9 35.7L910.9 40.6L906.5 38.2L902.1 40.6L903.1 35.7L899.4 32.3L904.4 31.7Z" stroke-width="1"/>
</svg>

<!-- timeline contents -->
<div class="abs" style="left:4px;top:577px;width:689px;height:1px;background:#34507c"></div>
<svg style="left:0;top:560px" width="700" height="112" viewBox="0 560 700 112" fill="none">
 <g fill="#5b9df2"><circle cx="114.4" cy="577.4" r="4.3"/><circle cx="263.2" cy="577.4" r="4.3"/></g>
 <path d="M110.3 577.5H118.6M259 577.5H267.4" stroke="#3b6fc0" stroke-width=".8"/>
 <rect x="449" y="565" width="6.6" height="24.6" fill="#9c9c9c"/>
 <circle cx="447.6" cy="577.3" r="6.2" fill="#5b9df2" stroke="#fff" stroke-width="1.6"/>
 <path d="M441.5 577.4H453.7" stroke="#fff" stroke-width=".9"/><path d="M449.6 566V589" stroke="#e8e8e8" stroke-width="1.2"/>
 <!-- keyframe icons -->
 <g fill="#5b9df2"><circle cx="14.6" cy="621.7" r="5.4" opacity=".95"/><circle cx="17.2" cy="621.7" r="5.4" stroke="#282828" stroke-width=".8"/><circle cx="21" cy="621.7" r="5.6" stroke="#282828" stroke-width=".8"/></g>
 <path d="M18.8 619.5L23.2 623.9M23.2 619.5L18.8 623.9" stroke="#1e3f78" stroke-width=".9"/>
 <circle cx="46.8" cy="621.7" r="7.3" stroke="#5b9df2" stroke-width=".9"/><circle cx="46.8" cy="621.7" r="5.5" fill="#5b9df2"/>
 <path d="M44.6 619.5L49 623.9M49 619.5L44.6 623.9" stroke="#1e3f78" stroke-width=".9"/>
 <!-- transport -->
 <g stroke="#cfcfcf" stroke-width="1" stroke-linejoin="round">
  <rect x="251.4" y="614.6" width="2.6" height="13.8"/><path d="M264 614.8V628.2L255.2 621.5Z"/>
  <path d="M303.6 614.8V628.2L295.2 621.5Z"/><rect x="304.8" y="614.6" width="1.6" height="13.8" stroke-width=".8"/><rect x="307.4" y="614.6" width="1.6" height="13.8" stroke-width=".8"/>
  <path d="M343.8 614.6V628.4L355.8 621.5Z"/>
  <path d="M393 614.8V628.2L401.2 621.5Z"/><rect x="388" y="614.6" width="1.6" height="13.8" stroke-width=".8"/><rect x="390.6" y="614.6" width="1.6" height="13.8" stroke-width=".8"/>
  <rect x="442.6" y="614.6" width="2.6" height="13.8"/><path d="M432.4 614.8V628.2L441.4 621.5Z"/>
 </g>
 <!-- bottom toolbar icons -->
 <circle cx="31.6" cy="654.4" r="2.7" fill="#5b9df2"/>
 <g stroke="#4a86dc" stroke-width="1"><rect x="36" y="647.4" width="14" height="14" rx="1"/><circle cx="43" cy="654.4" r="5.2"/><circle cx="43" cy="654.4" r="1.5" fill="#4a86dc" stroke="none"/><path d="M43 647.6V650M43 658.8V661.2M36.2 654.4H38.6M47.4 654.4H49.8" stroke-width="1.1"/></g>
 <g stroke="#cfcfcf" stroke-width="1" stroke-linecap="round" stroke-linejoin="round">
  <path d="M206 658.4A6.5 6.5 0 1 1 215.4 658.4"/><path d="M207.8 660H213.6" stroke-width="1.3"/><circle cx="210.4" cy="654.8" r="1.2"/><path d="M211.4 654L213.6 652.2"/>
  <path d="M205 655.5h.8M206 651.6l.6 .5M210.7 649.6v.8M215.6 655.5h-.8" stroke-width=".7"/>
  <rect x="344.2" y="649.6" width="12.6" height="10.2" rx=".8" stroke-width="1.1"/><path d="M341.6 661.4L343.6 648.6L356.6 647.4" stroke-width=".9"/><circle cx="357.4" cy="647.2" r="1"/><circle cx="341.4" cy="661.6" r="1"/>
  <path d="M478 651.6H481.2L486 647.4V661.4L481.2 657.2H478Z"/><path d="M488.4 651.6Q490.4 654.4 488.4 657.2M490.6 649.6Q493.8 654.4 490.6 659.2M492.8 647.8Q497 654.4 492.8 661" stroke-width=".9"/>
  <path d="M616.6 649.8L629.6 647.2L632.2 658.6L619.2 661.2Z" stroke-width=".9"/><path d="M618.6 648.4L631.8 649.8L630.4 661.2L617.2 659.8Z" stroke-width=".9"/>
  <path d="M624.5 650.8V657.8M621.5 652.6L627.5 656M627.5 652.6L621.5 656" stroke-width=".9"/>
 </g>
</svg>
<div class="abs" style="left:11px;top:591.5px;font-size:10.3px;line-height:12px;color:#f0f0f0">46.05</div>
<div class="abs" style="left:327px;width:40px;text-align:center;top:591.5px;font-size:10.3px;line-height:12px;color:#4a8de8">2.12</div>
<div class="abs" style="left:640px;width:46.5px;text-align:right;top:591.5px;font-size:10.3px;line-height:12px;color:#4a8de8">[3.21]</div>
<div class="abs" style="left:57.5px;top:648px;font-size:10.5px;line-height:13px;color:#5592ea;letter-spacing:-.2px">Frame &amp; Fit</div>

<!-- panel controls -->
<div class="key" style="left:703px;top:208px;width:113px;height:151px;border-radius:7px"></div>
<div class="key" style="left:818.5px;top:208px;width:36.0px;height:35px"></div>
<div class="key" style="left:818.5px;top:246.8px;width:36.0px;height:35px"></div>
<div class="key" style="left:818.5px;top:285.4px;width:36.0px;height:35px"></div>
<div class="key" style="left:818.5px;top:324px;width:36.0px;height:35px"></div>
<div class="key" style="left:857.5px;top:208px;width:54.0px;height:35px"></div>
<div class="key" style="left:915px;top:208px;width:55px;height:35px"></div>
<div class="key" style="left:857.5px;top:246.8px;width:54.0px;height:35px"></div>
<div class="key" style="left:915px;top:246.8px;width:55px;height:35px"></div>
<div class="key" style="left:857.5px;top:285.4px;width:54.0px;height:35px"></div>
<div class="key" style="left:915px;top:285.4px;width:55px;height:35px"></div>
<div class="key" style="left:857.5px;top:324px;width:74.0px;height:35px"></div>
<div class="key" style="left:934.5px;top:324px;width:35.5px;height:35px"></div>
<div class="ibox" style="left:863px;top:252.8px;width:43px;height:23.5px"></div>
<div class="ibox" style="left:921px;top:252.8px;width:43px;height:23.5px">-50.0</div>
<div class="ibox" style="left:863px;top:291.4px;width:43px;height:23.5px">50.0</div>
<div class="ibox" style="left:921px;top:291.4px;width:43px;height:23.5px"></div>
<div class="num" style="left:712px;top:220.8px">7</div>
<div class="num" style="left:749.5px;top:220.8px">8</div>
<div class="num" style="left:787px;top:220.8px">9</div>
<div class="num" style="left:712px;top:259.3px">4</div>
<div class="num" style="left:749.5px;top:259.3px">5</div>
<div class="num" style="left:787px;top:259.3px">6</div>
<div class="num" style="left:712px;top:296.8px">1</div>
<div class="num" style="left:749.5px;top:296.8px">2</div>
<div class="num" style="left:787px;top:296.8px">3</div>
<div class="num" style="left:712px;top:334.2px">0</div>
<div class="num" style="left:749.5px;top:334.2px">.</div>
<div class="num" style="left:864.5px;top:334.5px;width:60px;font-size:10.5px">Enter</div>
<div class="lbl" style="left:703.5px;top:381.2px">Position X</div>
<div class="val" style="left:858px;width:80px;top:381.2px">-40.7</div>
<div class="track" style="left:733.5px;top:400.5px;width:206px"></div>
<div class="fill" style="left:733.5px;top:400.5px;width:87.29999999999995px"></div>
<div class="tick" style="left:835.8px;top:397.7px"></div>
<div class="knob" style="left:813.3px;top:396.7px"></div>
<svg style="left:709px;top:399.2px" width="7" height="10" viewBox="0 0 7 10"><path d="M6.3 .8V9.2L.8 5Z" fill="none" stroke="#9a9a9a" stroke-width=".9" stroke-linejoin="round"/></svg>
<svg style="left:957.5px;top:399.2px" width="7" height="10" viewBox="0 0 7 10"><path d="M.7 .8V9.2L6.2 5Z" fill="none" stroke="#9a9a9a" stroke-width=".9" stroke-linejoin="round"/></svg>
<svg style="left:947.5px;top:382.7px" width="10" height="10" viewBox="0 0 10 10"><path d="M1 9 L1.6 6.6 L7 1.2 Q7.8 .5 8.7 1.4 Q9.5 2.2 8.8 3 L3.4 8.4Z M6.2 2 L8 3.8" fill="none" stroke="#4a8de8" stroke-width=".9" stroke-linejoin="round"/></svg>
<div class="lbl" style="left:703.5px;top:430.8px">Position Y</div>
<div class="val" style="left:858px;width:80px;top:430.8px">8.5</div>
<div class="track" style="left:733.5px;top:450.1px;width:206px"></div>
<div class="fill" style="left:733.5px;top:450.1px;width:106.20000000000005px"></div>
<div class="tick" style="left:835.8px;top:447.3px"></div>
<div class="knob" style="left:832.2px;top:446.3px"></div>
<svg style="left:709px;top:448.8px" width="7" height="10" viewBox="0 0 7 10"><path d="M6.3 .8V9.2L.8 5Z" fill="none" stroke="#9a9a9a" stroke-width=".9" stroke-linejoin="round"/></svg>
<svg style="left:957.5px;top:448.8px" width="7" height="10" viewBox="0 0 7 10"><path d="M.7 .8V9.2L6.2 5Z" fill="none" stroke="#9a9a9a" stroke-width=".9" stroke-linejoin="round"/></svg>
<svg style="left:947.5px;top:432.3px" width="10" height="10" viewBox="0 0 10 10"><path d="M1 9 L1.6 6.6 L7 1.2 Q7.8 .5 8.7 1.4 Q9.5 2.2 8.8 3 L3.4 8.4Z M6.2 2 L8 3.8" fill="none" stroke="#d8d8d8" stroke-width=".9" stroke-linejoin="round"/></svg>
<div class="lbl" style="left:703.5px;top:532.6px">Size</div>
<div class="val" style="left:858px;width:80px;top:532.6px">46.6</div>
<div class="track" style="left:733.5px;top:551.9px;width:206px"></div>
<div class="fill" style="left:733.5px;top:551.9px;width:28.100000000000023px"></div>
<div class="tick" style="left:786.7px;top:549.1px"></div>
<div class="knob" style="left:754.1px;top:548.1px"></div>
<svg style="left:709px;top:550.6px" width="7" height="10" viewBox="0 0 7 10"><path d="M6.3 .8V9.2L.8 5Z" fill="none" stroke="#9a9a9a" stroke-width=".9" stroke-linejoin="round"/></svg>
<svg style="left:957.5px;top:550.6px" width="7" height="10" viewBox="0 0 7 10"><path d="M.7 .8V9.2L6.2 5Z" fill="none" stroke="#9a9a9a" stroke-width=".9" stroke-linejoin="round"/></svg>
<svg style="left:947.5px;top:534.1px" width="10" height="10" viewBox="0 0 10 10"><path d="M1 9 L1.6 6.6 L7 1.2 Q7.8 .5 8.7 1.4 Q9.5 2.2 8.8 3 L3.4 8.4Z M6.2 2 L8 3.8" fill="none" stroke="#d8d8d8" stroke-width=".9" stroke-linejoin="round"/></svg>
<div class="lbl" style="left:703.5px;top:582.2px">Size X</div>
<div class="val" style="left:858px;width:80px;top:582.2px">46.6</div>
<div class="track" style="left:733.5px;top:601.5px;width:206px"></div>
<div class="fill" style="left:733.5px;top:601.5px;width:28.100000000000023px"></div>
<div class="tick" style="left:786.7px;top:598.7px"></div>
<div class="knob" style="left:754.1px;top:597.7px"></div>
<svg style="left:709px;top:600.2px" width="7" height="10" viewBox="0 0 7 10"><path d="M6.3 .8V9.2L.8 5Z" fill="none" stroke="#9a9a9a" stroke-width=".9" stroke-linejoin="round"/></svg>
<svg style="left:957.5px;top:600.2px" width="7" height="10" viewBox="0 0 7 10"><path d="M.7 .8V9.2L6.2 5Z" fill="none" stroke="#9a9a9a" stroke-width=".9" stroke-linejoin="round"/></svg>
<svg style="left:947.5px;top:583.7px" width="10" height="10" viewBox="0 0 10 10"><path d="M1 9 L1.6 6.6 L7 1.2 Q7.8 .5 8.7 1.4 Q9.5 2.2 8.8 3 L3.4 8.4Z M6.2 2 L8 3.8" fill="none" stroke="#d8d8d8" stroke-width=".9" stroke-linejoin="round"/></svg>
<div class="lbl" style="left:703.5px;top:631.8px">Size Y</div>
<div class="val" style="left:858px;width:80px;top:631.8px">46.6</div>
<div class="track" style="left:733.5px;top:651.0999999999999px;width:206px"></div>
<div class="fill" style="left:733.5px;top:651.0999999999999px;width:28.100000000000023px"></div>
<div class="tick" style="left:786.7px;top:648.3px"></div>
<div class="knob" style="left:754.1px;top:647.3px"></div>
<svg style="left:709px;top:649.8px" width="7" height="10" viewBox="0 0 7 10"><path d="M6.3 .8V9.2L.8 5Z" fill="none" stroke="#9a9a9a" stroke-width=".9" stroke-linejoin="round"/></svg>
<svg style="left:957.5px;top:649.8px" width="7" height="10" viewBox="0 0 7 10"><path d="M.7 .8V9.2L6.2 5Z" fill="none" stroke="#9a9a9a" stroke-width=".9" stroke-linejoin="round"/></svg>
<svg style="left:947.5px;top:633.3px" width="10" height="10" viewBox="0 0 10 10"><path d="M1 9 L1.6 6.6 L7 1.2 Q7.8 .5 8.7 1.4 Q9.5 2.2 8.8 3 L3.4 8.4Z M6.2 2 L8 3.8" fill="none" stroke="#d8d8d8" stroke-width=".9" stroke-linejoin="round"/></svg>
<div class="abs" style="left:710px;top:181.5px;font-size:13.5px;line-height:16px;color:#efefef">Position X</div>
<svg style="left:949.5px;top:186px" width="12" height="7" viewBox="0 0 12 7"><path d="M.6 .7L6 6L11.4 .7" fill="none" stroke="#4a90ea" stroke-width="1.3"/></svg>
<!-- operator glyphs -->
<svg style="left:818.5px;top:208px" width="152" height="151" viewBox="0 0 152 151" fill="none" stroke="#f2f2f2" stroke-width="1.5">
 <path d="M11.5 18H24.5M18 11.5V24.5"/>
 <path d="M11.5 57H24.5"/>
 <path d="M12.5 89.5L23.5 100.5M23.5 89.5L12.5 100.5" stroke-width="1.6"/>
 <path d="M11.5 133.5H24.5"/><circle cx="18" cy="128.6" r=".9" fill="#f2f2f2" stroke="none"/><circle cx="18" cy="138.4" r=".9" fill="#f2f2f2" stroke="none"/>
 <path d="M69.5 12L63 18L69.5 24"/>
 <path d="M120.5 12L127 18L120.5 24"/>
 <path d="M129 135.5L136 125.5" stroke-width="1.1"/><path d="M126.5 126.5H131M128.75 124.2V128.8M133.5 135.8H137.5" stroke-width="1"/>
</svg>
<!-- backspace -->
<svg style="left:789px;top:333.5px" width="17" height="13" viewBox="0 0 17 13" fill="none" stroke="#f0f0f0" stroke-width="1.15" stroke-linejoin="round"><path d="M5.2 .8H14.6Q16 .8 16 2.2V10.6Q16 12 14.6 12H5.2L.8 6.4Z"/><path d="M7.6 3.8L12.6 8.8M12.6 3.8L7.6 8.8"/></svg>
<!-- rotation -->
<div class="lbl" style="left:703.5px;top:491.5px">Rotation</div>
<div class="val" style="left:890px;width:80px;top:491.5px">17.0°</div>
<div class="abs" style="left:839.3px;top:475.9px;width:45.8px;height:45.8px;border-radius:50%;border:2px solid #fff"></div>
<div class="abs" style="left:872px;top:491.5px;width:7.4px;height:7.4px;border-radius:50%;background:#4a90ea"></div>
<svg style="left:816.5px;top:491.5px" width="9" height="12" viewBox="0 0 9 12" fill="none" stroke="#a8a8a8" stroke-width=".9" stroke-linejoin="round"><path d="M7.6 .7L.7 6.6L3.6 6.9L2.4 10.6L4.2 11.2L5.5 7.6L7.9 9.2Z"/></svg>
<svg style="left:900.5px;top:491.5px" width="9" height="12" viewBox="0 0 9 12" fill="none" stroke="#a8a8a8" stroke-width=".9" stroke-linejoin="round"><path d="M1.4 .7L8.3 6.6L5.4 6.9L6.6 10.6L4.8 11.2L3.5 7.6L1.1 9.2Z"/></svg>


</body>
</html>
